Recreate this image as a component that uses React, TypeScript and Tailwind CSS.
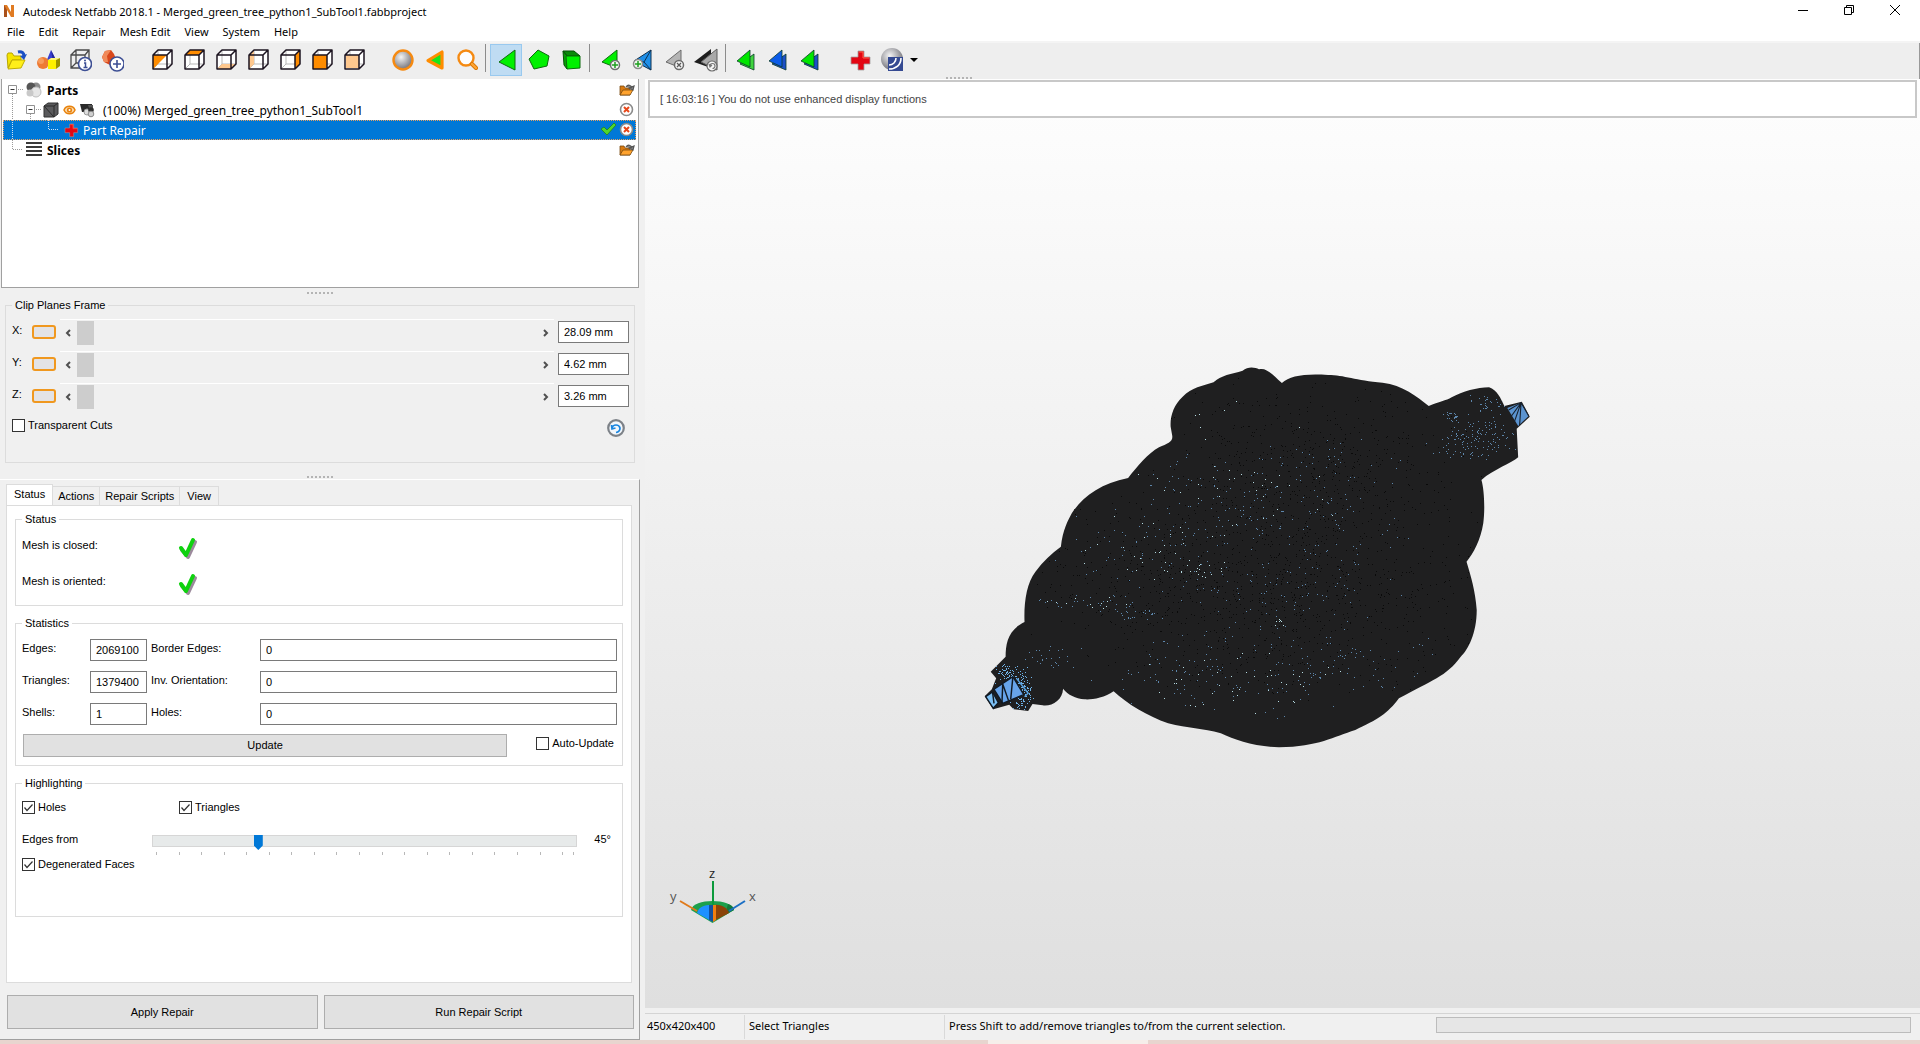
import React from 'react';

type IconProps = { children: React.ReactNode; size?: number };

const Svg: React.FC<IconProps> = ({ children, size = 24 }) => (
  <svg width={size} height={size} viewBox={`0 0 ${size} ${size}`} fill="none" aria-hidden="true" className="shrink-0">
    {children}
  </svg>
);

/* ---------- toolbar icons ---------- */

const OpenIcon = () => (
  <Svg>
    <path d="M3 7 L4 5 L8 5 L10 8 L17 8 L17 12 L8 12 L4 20 Z" fill="#f5e400" stroke="#b9a500" />
    <path d="M4 21 L8 12 L21 12 L17 20 Z" fill="#ffef1a" stroke="#c2ae00" />
    <path d="M14 4 C18 3 20 5 20 8" stroke="#1a4fc4" strokeWidth="3" />
    <path d="M16 8 L23 6 L20 12 Z" fill="#1a4fc4" />
  </Svg>
);

const ShapesIcon = () => (
  <Svg>
    <path d="M15 2 L21 14 L10 14 Z" fill="#3a3fd0" />
    <path d="M15 2 L21 14 L17 14 Z" fill="#23279a" />
    <circle cx="7" cy="15" r="6" fill="#ee7a33" />
    <circle cx="5" cy="13" r="3" fill="#f79b5c" />
    <path d="M12 12 H20 V21 H12 Z" fill="#fff000" />
    <path d="M12 12 L15 10 H24 L20 12 Z" fill="#fff97a" />
    <path d="M20 12 L24 10 V18 L20 21 Z" fill="#9c9200" />
  </Svg>
);

const PartInfoIcon = () => (
  <Svg>
    <path d="M3 7 H17 V20 H3 Z M3 7 L8 2 H21 V14 M17 7 L21 2 M8 2 V15 H19 M3 20 L8 15" stroke="#4a4a4a" strokeWidth="1.3" />
    <circle cx="17" cy="16" r="6.5" fill="#fff" stroke="#3d4f94" strokeWidth="1.6" />
    <path d="M16 15 H17.5 V19 M15.5 19.5 H19.5" stroke="#3d4f94" strokeWidth="1.5" />
    <circle cx="17" cy="12.5" r="1" fill="#3d4f94" />
  </Svg>
);

const AddPartIcon = () => (
  <Svg>
    <path d="M2 9 L5 3 L11 2 L14 6 L16 11 L10 17 L4 14 Z" fill="#d9481c" />
    <path d="M2 9 L5 3 L11 2 L7 8 L8 14 L4 14 Z" fill="#f08a5a" />
    <circle cx="17" cy="16" r="7" fill="#fff" stroke="#3d4f94" strokeWidth="1.6" />
    <path d="M17 12 V20 M13 16 H21" stroke="#3d4f94" strokeWidth="1.6" />
  </Svg>
);

const cubeFills = [
  { d: 'M3 7 H17 L3 21 Z', fill: '#ff8c00' },
  { d: 'M3 7 L8 2 H22 L17 7 Z', fill: '#ff8c00' },
  { d: 'M3 21 L8 16 H22 L17 21 Z', fill: '#ffc88e' },
  { d: 'M3 7 L8 2 V16 L3 21 Z', fill: '#ffc88e' },
  { d: 'M17 7 L22 2 V16 L17 21 Z', fill: '#ff8c00' },
  { d: 'M3 7 H17 V21 H3 Z', fill: '#ff8c00' },
  { d: 'M4 7 H17 V20 H4 Z', fill: '#ffc88e' },
];

const viewNames = ['Isometric', 'Top', 'Bottom', 'Left', 'Right', 'Front', 'Back'];

const CubeIcon: React.FC<{ index: number }> = ({ index }) => (
  <Svg>
    <path d="M3 7 L8 2 H22 V16 L17 21 H3 Z" fill="#fff" />
    <path d="M8 2 V16 H22 M3 21 L8 16" stroke="#b9b9b9" />
    <path d={cubeFills[index].d} fill={cubeFills[index].fill} />
    <path d="M3 7 H17 V21 H3 Z M3 7 L8 2 H22 V16 L17 21 M17 7 L22 2" stroke="#1c1420" strokeWidth="1.5" strokeLinejoin="round" />
  </Svg>
);

const SphereIcon = () => (
  <Svg>
    <defs>
      <radialGradient id="ball" cx="0.4" cy="0.35" r="0.7">
        <stop offset="0" stopColor="#f4f4f4" />
        <stop offset="1" stopColor="#6a6a72" />
      </radialGradient>
    </defs>
    <circle cx="13" cy="12" r="9.5" fill="url(#ball)" stroke="#f58a12" strokeWidth="2.4" />
  </Svg>
);

const ZoomTriangleIcon = () => (
  <Svg>
    <path d="M6 12.5 L20 4 V20 Z" fill="#19e619" stroke="#ff8c00" strokeWidth="3.2" strokeLinejoin="round" />
  </Svg>
);

const MagnifierIcon = () => (
  <Svg>
    <circle cx="12" cy="10" r="7.5" fill="#fdfdfd" stroke="#f58a12" strokeWidth="2.4" />
    <path d="M18 16 L22 20" stroke="#d87400" strokeWidth="4" strokeLinecap="round" />
    <path d="M18 16 L22 20" stroke="#ffa533" strokeWidth="2.4" strokeLinecap="round" />
  </Svg>
);

const TriangleIcon = () => (
  <Svg>
    <path d="M5 14 L21 2 V22 Z" fill="#00f000" stroke="#0d6b0d" />
  </Svg>
);

const PentagonIcon = () => (
  <Svg>
    <path d="M12 2 L23 8 L21 18 L8 21 L3 11 Z" fill="#00f000" stroke="#0d6b0d" />
  </Svg>
);

const ShellIcon = () => (
  <Svg>
    <path d="M5 3 H16 L22 8 H9 Z" fill="#0a8a0a" stroke="#064f06" />
    <path d="M5 3 L9 8 V21 L6 17 Z" fill="#06a006" stroke="#064f06" />
    <path d="M8 8 H22 V20 L9 21 Z" fill="#00f000" stroke="#0d6b0d" />
  </Svg>
);

const AddTriangleIcon = () => (
  <Svg>
    <path d="M4 14 L19 2 V20 Z" fill="#00f000" stroke="#0d6b0d" />
    <circle cx="17" cy="17" r="4.5" fill="#f3f8f3" stroke="#707070" strokeWidth="1.5" />
    <path d="M17 14 V20 M14 17 H20" stroke="#1fa01f" strokeWidth="1.5" />
  </Svg>
);

const AddNodeTriangleIcon = () => (
  <Svg>
    <path d="M4 13 L21 2 V22 Z" fill="#1f8fe8" stroke="#10314f" />
    <path d="M21 2 L14 14 L21 22 M4 13 L14 14" stroke="#10314f" />
    <circle cx="8" cy="16" r="4.5" fill="#eef6ee" stroke="#8a8a8a" strokeWidth="1.5" />
    <path d="M8 13 V19 M5 16 H11" stroke="#1fa01f" strokeWidth="1.5" />
  </Svg>
);

const RemoveTriangleIcon = () => (
  <Svg>
    <path d="M4 14 L19 2 V20 Z" fill="#b4b4b4" stroke="#6a6a6a" />
    <circle cx="17" cy="17" r="4.5" fill="#f5f5f5" stroke="#6a6a6a" strokeWidth="1.5" />
    <path d="M15 15 L19 19 M19 15 L15 19" stroke="#5a5a5a" strokeWidth="1.3" />
  </Svg>
);

const RevertTriangleIcon = () => (
  <Svg>
    <path d="M0 14 L17 1 V20 Z" fill="#1d1d1d" />
    <path d="M7 14 L23 1 V22 Z" fill="#a9a9a9" stroke="#5c5c5c" />
    <circle cx="18" cy="18" r="5" fill="#f5f5f5" stroke="#6a6a6a" strokeWidth="1.2" />
    <path d="M16 18 A2.5 2.5 0 1 1 18.5 20.5 M15 16 L16 19 L18 17" stroke="#777" strokeWidth="1.2" />
  </Svg>
);

const DoubleTriangleIcon: React.FC<{ front: string; back: string }> = ({ front, back }) => (
  <Svg>
    <path d="M6 16 L20 6 V22 Z" fill={back} stroke="#0b3a2a" strokeWidth="0.8" />
    <path d="M3 13 L16 2 V19 Z" fill={front} stroke="#0b3a2a" strokeWidth="0.8" />
  </Svg>
);

const RedCrossIcon: React.FC<{ size?: number }> = ({ size = 24 }) => (
  <svg width={size} height={size} viewBox="0 0 24 24" fill="none" aria-hidden="true" className="shrink-0">
    <path d="M10 3 H16 V9 H22 V16 H16 V22 H10 V16 H3 V9 H10 Z" fill="#e30613" stroke="#a3a0a0" strokeWidth="0.8" />
    <path d="M11 4 H15 V10 H21" stroke="#ff5f4a" />
  </svg>
);

const ShadingIcon = () => (
  <Svg>
    <circle cx="12" cy="11" r="11" fill="url(#ball)" />
    <path d="M8 9 H23 V23 H8 Z" fill="#354a92" />
    <path d="M9 21 C16 21 21 17 21 10 M9 17 C13 17 16 14 16 10" stroke="#fff" strokeWidth="1.6" />
  </Svg>
);

/* ---------- tree icons ---------- */

const PartsIcon = () => (
  <Svg size={16}>
    <circle cx="10" cy="5" r="4.5" fill="#8c8c8c" />
    <circle cx="5" cy="5" r="4.5" fill="#555" />
    <circle cx="10" cy="10" r="5" fill="#e6e6e6" stroke="#bdbdbd" />
    <circle cx="4" cy="11" r="3.5" fill="#c9c9c9" />
  </Svg>
);

const MeshIcon = () => (
  <Svg size={16}>
    <path d="M1 4 L5 1 H15 V12 L11 15 H1 Z" fill="#5a5a5c" stroke="#333" />
    <path d="M1 4 H11 V15 M11 4 L15 1 M1 4 L11 15" stroke="#2a2a2a" />
  </Svg>
);

const EyeIcon = () => (
  <svg width={13} height={12} viewBox="0 0 13 12" fill="none" aria-hidden="true" className="shrink-0">
    <path d="M1 6 C3 1 10 1 12 6 C10 11 3 11 1 6 Z" fill="#fbd9ab" stroke="#e8820c" strokeWidth="1.5" />
    <circle cx="6.5" cy="6" r="2.6" fill="#e8820c" />
    <circle cx="6.5" cy="6" r="1" fill="#fff" />
  </svg>
);

const SupportIcon = () => (
  <Svg size={16}>
    <path d="M0 2 H12 V8 L8 10 H2 Z" fill="#2a2a2a" />
    <path d="M8 3 H13 V6 H9 Z" fill="#555" />
    <circle cx="7" cy="10" r="3" fill="#dedede" stroke="#9a9a9a" />
    <circle cx="11" cy="8" r="2.8" fill="#2f2f2f" />
    <circle cx="11" cy="12" r="2.8" fill="#cfcfcf" stroke="#8a8a8a" />
  </Svg>
);

const SlicesIcon = () => (
  <Svg size={16}>
    <path d="M0 1 H16 M0 5 H16 M0 9 H16 M0 13 H16" stroke="#3a3a3a" strokeWidth="2" />
  </Svg>
);

const FolderIcon = () => (
  <Svg size={16}>
    <path d="M1 4 H5 L6 6 H11 V13 H1 Z" fill="#d97a10" stroke="#7a4a10" strokeWidth="0.8" />
    <path d="M1 13 L4 8 H14 L11 13 Z" fill="#ffa32e" stroke="#7a4a10" strokeWidth="0.8" />
    <path d="M7 5 C9 2 12 3 13 6 M15 4 L14 8 L10 6 Z" stroke="#555" fill="#888" strokeWidth="1.2" />
  </Svg>
);

const CloseBadgeIcon = () => (
  <Svg size={16}>
    <circle cx="7.5" cy="7.5" r="6" fill="#fff" stroke="#8a8a8a" strokeWidth="1.6" />
    <path d="M5 5 L10 10 M10 5 L5 10" stroke="#e8481a" strokeWidth="2" />
  </Svg>
);

const SmallCheckIcon = () => (
  <Svg size={16}>
    <path d="M0 7 L3 5 L6 8 L13 1 L15 3 L6 13 Z" fill="#4fd62c" stroke="#1f7d12" strokeWidth="0.7" />
  </Svg>
);

const GreenCheck: React.FC<{ label: string }> = ({ label }) => (
  <svg width={24} height={26} viewBox="0 0 24 26" fill="none" role="img" aria-label={label}>
    <path d="M5 14 L11 21 L18 6" stroke="#9c8a9c" strokeWidth="4" strokeLinecap="round" strokeLinejoin="round" />
    <path d="M4 12 L9 19 L16 4" stroke="#0fd20f" strokeWidth="4" strokeLinecap="round" strokeLinejoin="round" />
  </svg>
);

const Minus: React.FC<{ x: number }> = ({ x }) => (
  <>
    <path d={`M${x} 5.5 h8 v8 h-8 Z`} fill="#fff" stroke="#919191" />
    <path d={`M${x + 2} 9.5 h4`} stroke="#333" />
  </>
);

/* ---------- small building blocks ---------- */

const ToolButton: React.FC<{ label: string; active?: boolean; children: React.ReactNode }> = ({ label, active, children }) => (
  <button
    type="button"
    aria-label={label}
    className={
      active
        ? 'flex h-8 w-8 items-center justify-center border border-[#99c9ef] bg-[#bfdcf3]'
        : 'flex h-8 w-8 items-center justify-center border border-transparent'
    }
  >
    {children}
  </button>
);

const Separator = () => <div className="mr-1 ml-[3px] h-7 w-px bg-[#8c8c8c]" />;

const Grip = () => (
  <div className="flex gap-0.5">
    {Array.from({ length: 7 }, (_, i) => (
      <span key={i} className="h-0.5 w-0.5 bg-[#b4b4b4]" />
    ))}
  </div>
);

const CheckBox: React.FC<{ label: string; checked?: boolean }> = ({ label, checked }) => (
  <label className="flex h-[13px] items-center gap-[3px] leading-[13px] whitespace-nowrap">
    <span className="relative h-[13px] w-[13px] shrink-0">
      <input
        type="checkbox"
        defaultChecked={checked}
        className="peer block h-[13px] w-[13px] appearance-none border border-[#333] bg-white"
      />
      <svg width="13" height="13" viewBox="0 0 13 13" fill="none" className="pointer-events-none absolute inset-0 hidden peer-checked:block">
        <path d="M2.5 6.5 L5 9.5 L10.5 3.5" stroke="#333" strokeWidth="1.2" />
      </svg>
    </span>
    {label}
  </label>
);

const Group: React.FC<{ title: string; className: string; children: React.ReactNode }> = ({ title, className, children }) => (
  <fieldset className={`min-w-0 border border-[#dcdcdc] ${className}`}>
    <legend className="px-[3px] leading-4">{title}</legend>
    {children}
  </fieldset>
);

const Chevron: React.FC<{ left?: boolean }> = ({ left }) => (
  <svg width="8" height="8" viewBox="0 0 8 8" fill="none" aria-hidden="true">
    <path d={left ? 'M6 1 L3 4 L6 7' : 'M2 1 L5 4 L2 7'} stroke="#505050" strokeWidth="2" />
  </svg>
);

const ClipRow: React.FC<{ axis: string; value: string }> = ({ axis, value }) => (
  <div className="flex h-8 items-center">
    <label htmlFor={`clip-${axis}`} className="w-5 pb-1">{axis}:</label>
    <button type="button" aria-label={`Toggle ${axis} clip plane`} className="h-[14px] w-6 rounded-[3px] border-2 border-[#f0981f] bg-[#e3e3e6]" />
    <div className="ml-1 flex h-[26px] flex-1 items-center border-t border-white">
      <button type="button" aria-label={`Decrease ${axis}`} className="flex w-[17px] justify-center pr-[2px]">
        <Chevron left />
      </button>
      <input
        type="range"
        aria-label={`${axis} clip position`}
        defaultValue={0}
        className="h-6 min-w-0 flex-1 appearance-none bg-transparent [&::-webkit-slider-thumb]:h-6 [&::-webkit-slider-thumb]:w-[17px] [&::-webkit-slider-thumb]:appearance-none [&::-webkit-slider-thumb]:bg-[#cdcdcd]"
      />
      <button type="button" aria-label={`Increase ${axis}`} className="flex w-[17px] justify-center pl-[2px]">
        <Chevron />
      </button>
    </div>
    <input id={`clip-${axis}`} defaultValue={value} className="ml-1 h-[22px] w-[71px] border border-[#7a7a7a] bg-white px-[5px]" />
  </div>
);

const Stat: React.FC<{ id: string; label: string; value: string }> = ({ id, label, value }) => (
  <>
    <label htmlFor={id} className="pb-1">{label}</label>
    <input id={id} readOnly defaultValue={value} className="h-[22px] w-full min-w-0 border border-[#7a7a7a] bg-white px-[5px]" />
  </>
);

/* ---------- page sections ---------- */

const menuItems = ['File', 'Edit', 'Repair', 'Mesh Edit', 'View', 'System', 'Help'];

const TitleBar = () => (
  <header className="flex h-[22px] shrink-0 items-center bg-white pr-[2px] pl-[2px] font-['Noto_Sans',sans-serif] text-[11px]">
    <svg width="14" height="14" viewBox="0 0 14 14" fill="none" aria-hidden="true">
      <path d="M2 13 V1 H5 L9 8 V1 H12 V13 H9 L5 6 V13 Z" fill="#e07b22" />
      <path d="M2 13 V1 L5 6 V13 Z" fill="#a9501a" />
    </svg>
    <h1 className="ml-[7px] flex-1 pt-[2px]">Autodesk Netfabb 2018.1 - Merged_green_tree_python1_SubTool1.fabbproject</h1>
    <div className="flex">
      <button type="button" aria-label="Minimize" className="flex w-[46px] justify-center">
        <svg width="12" height="12" viewBox="0 0 12 12"><path d="M1 5.5 H11" stroke="#000" /></svg>
      </button>
      <button type="button" aria-label="Restore" className="flex w-[45px] justify-center">
        <svg width="12" height="12" viewBox="0 0 12 12" fill="none">
          <path d="M1.5 2.5 H8.5 V9.5 H1.5 Z M3.5 2 V0.5 H10.5 V7.5 H9" stroke="#000" />
        </svg>
      </button>
      <button type="button" aria-label="Close" className="flex w-[47px] justify-center">
        <svg width="12" height="12" viewBox="0 0 12 12"><path d="M1 0 L11 10 M11 0 L1 10" stroke="#000" /></svg>
      </button>
    </div>
  </header>
);

const Toolbar = () => (
  <div className="flex h-9 shrink-0 items-start border-r border-[#999] bg-[#eee] pt-px">
    <ToolButton label="Open"><OpenIcon /></ToolButton>
    <ToolButton label="Part library"><ShapesIcon /></ToolButton>
    <ToolButton label="Part info"><PartInfoIcon /></ToolButton>
    <ToolButton label="Add part"><AddPartIcon /></ToolButton>
    <div className="mr-4 ml-[18px] flex">
      {viewNames.map((name, i) => (
        <ToolButton key={name} label={name}><CubeIcon index={i} /></ToolButton>
      ))}
    </div>
    <ToolButton label="Shaded"><SphereIcon /></ToolButton>
    <ToolButton label="Zoom to selection"><ZoomTriangleIcon /></ToolButton>
    <ToolButton label="Zoom"><MagnifierIcon /></ToolButton>
    <Separator />
    <ToolButton label="Select triangles" active><TriangleIcon /></ToolButton>
    <ToolButton label="Select surfaces"><PentagonIcon /></ToolButton>
    <ToolButton label="Select shells"><ShellIcon /></ToolButton>
    <Separator />
    <ToolButton label="Add triangles"><AddTriangleIcon /></ToolButton>
    <ToolButton label="Add nodes"><AddNodeTriangleIcon /></ToolButton>
    <ToolButton label="Remove triangles"><RemoveTriangleIcon /></ToolButton>
    <ToolButton label="Revert triangles"><RevertTriangleIcon /></ToolButton>
    <Separator />
    <ToolButton label="Front triangles"><DoubleTriangleIcon front="#00e600" back="#3fd43f" /></ToolButton>
    <ToolButton label="Back triangles"><DoubleTriangleIcon front="#0b5be8" back="#1c50c8" /></ToolButton>
    <ToolButton label="Both triangles"><DoubleTriangleIcon front="#00e600" back="#1c50c8" /></ToolButton>
    <div className="ml-[18px] flex">
      <ToolButton label="Repair"><RedCrossIcon /></ToolButton>
      <ToolButton label="Shading"><ShadingIcon /></ToolButton>
      <button type="button" aria-label="Shading options" className="flex h-8 w-3 items-center justify-center">
        <svg width="8" height="4" viewBox="0 0 8 4"><path d="M0 0 H8 L4 4 Z" fill="#000" /></svg>
      </button>
    </div>
    <div className="ml-[26px] self-end"><Grip /></div>
  </div>
);

const PartTree = () => (
  <div className="mr-px ml-px h-[209px] border border-t-0 border-[#a0a0a0] bg-white pt-px pr-[2px] pl-px font-['Noto_Sans',sans-serif] text-[12px] leading-5 text-black">
    <div className="flex h-5 items-center pr-px">
      <svg width="22" height="20" viewBox="0 0 22 20" fill="none" className="mr-px shrink-0">
        <path d="M9.5 14 V20 M15 9.5 H20" stroke="#999" strokeDasharray="1 1" />
        <Minus x={5.5} />
      </svg>
      <PartsIcon />
      <span className="ml-[5px] flex-1 pt-px font-bold">Parts</span>
      <FolderIcon />
    </div>
    <div className="flex h-5 items-center pr-px">
      <svg width="38" height="20" viewBox="0 0 38 20" fill="none" className="mr-[2px] shrink-0">
        <path d="M9.5 0 V20 M33 9.5 H38 M27.5 14 V20" stroke="#999" strokeDasharray="1 1" />
        <Minus x={23.5} />
      </svg>
      <MeshIcon />
      <span className="ml-1"><EyeIcon /></span>
      <span className="ml-1"><SupportIcon /></span>
      <span className="ml-[7px] flex-1 pt-px">(100%) Merged_green_tree_python1_SubTool1</span>
      <CloseBadgeIcon />
    </div>
    <div className="flex h-5 items-center border border-dotted border-[#e8a060] bg-[#0078d7] text-white">
      <svg width="58" height="20" viewBox="0 0 58 20" fill="none" className="mr-px shrink-0">
        <path d="M8.5 0 V20 M44.5 0 V9.5 H55" stroke="#cfe2f5" strokeDasharray="1 1" />
      </svg>
      <RedCrossIcon size={16} />
      <span className="ml-1 flex-1 pt-px">Part Repair</span>
      <SmallCheckIcon />
      <span className="ml-[2px]"><CloseBadgeIcon /></span>
    </div>
    <div className="flex h-5 items-center pr-px">
      <svg width="22" height="20" viewBox="0 0 22 20" fill="none" className="mr-px shrink-0">
        <path d="M9.5 0 V9.5 H20" stroke="#999" strokeDasharray="1 1" />
      </svg>
      <SlicesIcon />
      <span className="ml-[5px] flex-1 pt-px font-bold">Slices</span>
      <FolderIcon />
    </div>
  </div>
);

const ClipPlanes = () => (
  <Group title="Clip Planes Frame" className="mr-[5px] ml-[5px] h-[166px] pr-[5px] pl-[6px]">
    <div className="pt-[3px]">
      <ClipRow axis="X" value="28.09 mm" />
      <ClipRow axis="Y" value="4.62 mm" />
      <ClipRow axis="Z" value="3.26 mm" />
    </div>
    <div className="mt-[7px] mr-1 flex items-start justify-between">
      <CheckBox label="Transparent Cuts" />
      <button type="button" aria-label="Reset clip planes">
        <svg width="18" height="18" viewBox="0 0 18 18" fill="none">
          <circle cx="9" cy="9" r="7.8" fill="#f2f7fc" stroke="#7d8288" strokeWidth="2.2" />
          <path d="M5 9 C6 5 12 5 13 9 C13 11 12 13 9 13.5 M4.5 6 L5 10 L8.5 9" stroke="#1a86e0" strokeWidth="1.7" />
        </svg>
      </button>
    </div>
  </Group>
);

const ticks = [...Array.from({ length: 19 }, (_, i) => i * 10), 185];

const RepairPanel = () => (
  <section className="mt-px flex flex-1 flex-col border-t border-r border-b border-t-white border-r-[#a0a0a0] border-b-[#a0a0a0] pt-1 pr-[7px] pl-[6px]">
    <div role="tablist" className="flex items-end">
      <button type="button" role="tab" aria-selected="true" className="-mb-px h-[22px] border border-b-0 border-[#dcdcdc] bg-white px-[7px] pb-[2px]">Status</button>
      <button type="button" role="tab" aria-selected="false" className="h-[19px] border-t border-r border-[#dcdcdc] px-[5px]">Actions</button>
      <button type="button" role="tab" aria-selected="false" className="h-[19px] border-t border-r border-[#dcdcdc] px-[5px]">Repair Scripts</button>
      <button type="button" role="tab" aria-selected="false" className="h-[19px] border-t border-r border-[#dcdcdc] px-[7px]">View</button>
    </div>
    <div role="tabpanel" className="flex flex-1 flex-col gap-[9px] border border-[#dcdcdc] bg-white pt-[5px] pr-2 pl-2">
      <Group title="Status" className="h-[95px] pl-[6px]">
        <div className="flex h-9 items-center">
          <span className="w-[155px]">Mesh is closed:</span>
          <span className="pt-2"><GreenCheck label="Yes" /></span>
        </div>
        <div className="flex h-9 items-center">
          <span className="w-[155px]">Mesh is oriented:</span>
          <span className="pt-2"><GreenCheck label="Yes" /></span>
        </div>
      </Group>
      <Group title="Statistics" className="h-[151px] pr-[5px] pl-[6px]">
        <div className="grid grid-cols-[68px_57px_113px_1fr] items-center gap-y-[10px] pt-2 [&>label:nth-of-type(even)]:pl-1">
          <Stat id="edges" label="Edges:" value="2069100" />
          <Stat id="border-edges" label="Border Edges:" value="0" />
          <Stat id="triangles" label="Triangles:" value="1379400" />
          <Stat id="inv-orientation" label="Inv. Orientation:" value="0" />
          <Stat id="shells" label="Shells:" value="1" />
          <Stat id="holes" label="Holes:" value="0" />
        </div>
        <div className="mt-[9px] ml-px flex items-start justify-between">
          <button type="button" className="mr-[29px] h-[23px] flex-1 border border-[#adadad] bg-[#e1e1e1]">Update</button>
          <div className="mt-[3px] mr-[3px]"><CheckBox label="Auto-Update" /></div>
        </div>
      </Group>
      <Group title="Highlighting" className="h-[142px] pr-[11px] pl-[6px]">
        <div className="grid grid-cols-[157px_1fr] pt-[10px]">
          <CheckBox label="Holes" checked />
          <CheckBox label="Triangles" checked />
        </div>
        <div className="mt-[21px] flex items-start">
          <label htmlFor="edge-angle" className="-mt-1 w-[130px] leading-4">Edges from</label>
          <div className="flex-1">
            <input
              id="edge-angle"
              type="range"
              min={0}
              max={185}
              step={5}
              defaultValue={45}
              className="block h-3 w-full appearance-none border border-[#d6d6d6] bg-[#e7eaea] [&::-webkit-slider-thumb]:mt-[3px] [&::-webkit-slider-thumb]:h-[15px] [&::-webkit-slider-thumb]:w-[9px] [&::-webkit-slider-thumb]:appearance-none [&::-webkit-slider-thumb]:bg-[#0078d7] [&::-webkit-slider-thumb]:[clip-path:polygon(0_0,100%_0,100%_70%,50%_100%,0_70%)]"
            />
            <div className="relative mx-1 mt-[5px] h-[3px]">
              {ticks.map((t) => (
                <span key={t} className="absolute h-[3px] w-px bg-[#b8b8b8]" style={{ left: `${(t / 185) * 100}%` }} />
              ))}
            </div>
          </div>
          <output htmlFor="edge-angle" className="-mt-1 ml-[17px] leading-4">45°</output>
        </div>
        <div className="mt-[3px]"><CheckBox label="Degenerated Faces" checked /></div>
      </Group>
    </div>
    <div className="mt-3 -mr-[2px] mb-[10px] ml-px flex gap-[6px]">
      <button type="button" className="h-[34px] flex-1 border border-[#adadad] bg-[#e1e1e1]">Apply Repair</button>
      <button type="button" className="h-[34px] flex-1 border border-[#adadad] bg-[#e1e1e1]">Run Repair Script</button>
    </div>
  </section>
);

/* ---------- 3D view ---------- */

const outline =
  'M552 230 C550 200 560 165 585 140 C610 112 640 108 670 97 C690 75 720 72 750 62 C765 48 785 52 795 58 C815 52 830 72 858 99 C880 78 920 70 985 75 C1030 75 1060 92 1135 98 C1190 105 1230 140 1262 168 C1290 155 1310 152 1325 142 C1355 125 1395 112 1428 112 C1450 120 1460 145 1470 168 L1518 155 L1540 200 L1504 236 L1508 322 C1490 340 1440 358 1407 390 C1415 420 1417 480 1412 520 C1405 570 1385 610 1366 635 C1378 680 1390 720 1394 780 C1394 850 1370 900 1350 920 C1310 980 1270 990 1180 1045 C1150 1090 1120 1110 1060 1140 C1000 1160 960 1190 850 1192 C780 1190 730 1170 690 1150 C640 1135 600 1135 545 1120 C490 1100 430 1060 395 1024 C370 1045 330 1050 315 1048 C290 1045 270 1035 256 1016 C255 1050 225 1070 200 1066 L172 1062 L160 1083 L120 1078 L108 1064 L64 1078 L41 1038 L60 1018 L72 985 L57 965 L98 920 C98 880 105 840 150 816 C148 760 155 700 180 665 C200 635 225 610 250 590 C255 540 270 510 280 490 C310 440 360 400 435 384 C460 350 490 310 520 292 C545 280 560 275 556 255 Z';

// x, y, spread x, spread y, count
type Cluster = [number, number, number, number, number];

const scatter = (clusters: Cluster[], seed: number) => {
  let s = seed;
  const rnd = () => {
    s = (s * 16807) % 2147483647;
    return s / 2147483647;
  };
  let d = '';
  clusters.forEach(([cx, cy, sx, sy, n]) => {
    for (let i = 0; i < n; i++) {
      const x = Math.round(cx + (rnd() + rnd() - 1) * sx);
      const y = Math.round(cy + (rnd() + rnd() - 1) * sy);
      d += `M${x} ${y}h1v1h-1z`;
    }
  });
  return d;
};

const blueSpecks = scatter(
  [
    [290, 160, 110, 45, 100], [200, 130, 60, 40, 30], [340, 110, 110, 30, 40], [170, 200, 100, 50, 60],
    [300, 240, 120, 40, 80], [380, 200, 70, 60, 40], [250, 320, 150, 50, 120], [380, 310, 90, 50, 60],
    [110, 253, 60, 10, 26], [155, 262, 14, 10, 16], [178, 263, 10, 6, 10], [75, 308, 35, 12, 26],
    [510, 85, 40, 25, 90], [500, 98, 46, 14, 50], [481, 66, 8, 6, 22], [515, 52, 24, 10, 30],
  ],
  4217,
);
const paleSpecks = scatter(
  [
    [260, 140, 110, 40, 34], [180, 200, 80, 40, 30], [240, 220, 40, 12, 16], [309, 271, 6, 5, 7],
    [270, 330, 130, 40, 44], [110, 252, 60, 8, 12], [280, 60, 130, 40, 10],
  ],
  90101,
);
const darkSpecks = scatter([[340, 110, 170, 90, 500], [330, 240, 190, 120, 900], [170, 230, 120, 90, 260]], 733);
const noseSpecks = scatter([[38, 324, 20, 12, 90], [50, 348, 14, 16, 80], [52, 334, 10, 14, 50]], 52711);

const Model = () => (
  <svg width="570" height="410" viewBox="0 0 570 410" fill="none" role="img" aria-label="Mesh preview" className="absolute top-[271px] left-[325px]">
    <defs>
      <clipPath id="body">
        <path d={outline} transform="scale(0.3635 0.3333)" />
      </clipPath>
    </defs>
    <g transform="scale(0.3635 0.3333)">
      <path d={outline} fill="#1f1f20" />
      <path d="M1478 174 L1516 158 L1537 198 L1508 228 Z" fill="#5b93cf" />
      <path d="M1516 158 L1512 226 M1516 158 L1482 180 M1516 158 L1488 200 M1516 158 L1498 214 M1516 158 L1537 198" stroke="#16202c" strokeWidth="3" />
    </g>
    <g shapeRendering="crispEdges" clipPath="url(#body)">
      <path d={darkSpecks} fill="#0a0a0a" />
      <path d={blueSpecks} fill="#5d86ab" />
      <path d={paleSpecks} fill="#b5dbe2" />
      <path d={noseSpecks} fill="#6fb1e6" />
    </g>
    <g transform="scale(0.3635 0.3333)" stroke="#111a24" strokeWidth="4">
      <path d="M43 1040 L62 1026 L78 1058 L64 1075 Z" fill="#7cc0f5" />
      <path d="M66 1018 L118 980 L148 1034 L90 1060 Z" fill="#67a4ea" />
      <path d="M118 980 L112 1048 M90 1002 L106 1052 M90 1002 L88 1058 M62 1026 L66 1060" />
      <path d="M128 985 L160 1030 L150 1040" stroke="#5aa3e0" />
    </g>
  </svg>
);

const AxisGizmo = () => (
  <svg width="100" height="64" viewBox="0 0 100 64" fill="none" role="img" aria-label="Axes" className="absolute bottom-[80px] left-[20px]">
    <path d="M26 46 C28 34 67 34 69 46 L47.5 59 Z" fill="#1ca04c" />
    <path d="M60 51 L69 46 C69 43 66 41 63 40 Z" fill="#127a3a" />
    <path d="M15 37 L32 47" stroke="#e07a1a" strokeWidth="2" />
    <path d="M80 37 L64 47" stroke="#1b6fc4" strokeWidth="2" />
    <path d="M32 49 C34 42 40 41 46 41 V57 Z" fill="#1e90ff" />
    <path d="M44 41 H48 V58 L44 56 Z" fill="#14509c" />
    <path d="M49 41 C57 40 62 44 64 49 L49 57 Z" fill="#8a4308" />
    <path d="M48 41 H51 V56 L48 58 Z" fill="#f07f10" />
    <path d="M48 17 V41" stroke="#0d9a3c" strokeWidth="2" />
    <g fontFamily="Open Sans, sans-serif" fontSize="13" fill="#555">
      <text x="44" y="14" fill="#222">z</text>
      <text x="5" y="37">y</text>
      <text x="84" y="37">x</text>
    </g>
  </svg>
);

const Viewport = () => (
  <div className="relative min-h-0 flex-1 bg-linear-to-b from-[#fefefe] to-[#dfdfdf] pt-px pr-[3px] pl-[3px]">
    <div className="flex h-[38px] items-center border-2 border-[#c8c8c8] bg-white pl-[10px] text-[#444]">
      [ 16:03:16 ] You do not use enhanced display functions
    </div>
    <Model />
    <AxisGizmo />
  </div>
);

const StatusBar = () => (
  <footer className="mt-[5px] flex h-[27px] items-center border-t border-[#d4d4d4] font-['Noto_Sans',sans-serif] text-[11px]">
    <span className="flex h-6 w-[100px] items-center border-r border-[#d9d9d9] pb-[2px] pl-[2px]">450x420x400</span>
    <span className="flex h-6 w-[200px] items-center border-r border-[#d9d9d9] pb-[2px] pl-1">Select Triangles</span>
    <span className="flex-1 pb-[2px] pl-1">Press Shift to add/remove triangles to/from the current selection.</span>
    <div role="progressbar" aria-label="Progress" className="mr-[9px] mb-1 h-4 w-[475px] border border-[#bcbcbc] bg-[#e6e6e6]" />
  </footer>
);

const App: React.FC = () => {
  return (
    <div className="flex h-screen flex-col overflow-hidden bg-[#f0f0f0] font-['Liberation_Sans',Arial,sans-serif] text-[11px] text-black">
      <TitleBar />
      <nav className="flex h-[21px] shrink-0 items-center gap-[14px] border-b-2 border-[#f4f4f4] bg-white pt-px pl-[7px] font-['Noto_Sans',sans-serif] text-[11px]">
        {menuItems.map((item) => (
          <button key={item} type="button">{item}</button>
        ))}
      </nav>
      <Toolbar />
      <div className="flex min-h-0 flex-1">
        <aside className="flex w-1/3 shrink-0 flex-col">
          <PartTree />
          <div className="flex h-[9px] items-center justify-center"><Grip /></div>
          <ClipPlanes />
          <div className="flex h-[15px] items-end justify-center"><Grip /></div>
          <RepairPanel />
        </aside>
        <main className="ml-[5px] flex min-w-0 flex-1 flex-col">
          <Viewport />
          <StatusBar />
        </main>
      </div>
      <div className="flex h-1 shrink-0 bg-[#e8d5cf]">
        <div className="ml-[988px] w-40 bg-[#f6eeea]" />
      </div>
    </div>
  );
};

export default App;
